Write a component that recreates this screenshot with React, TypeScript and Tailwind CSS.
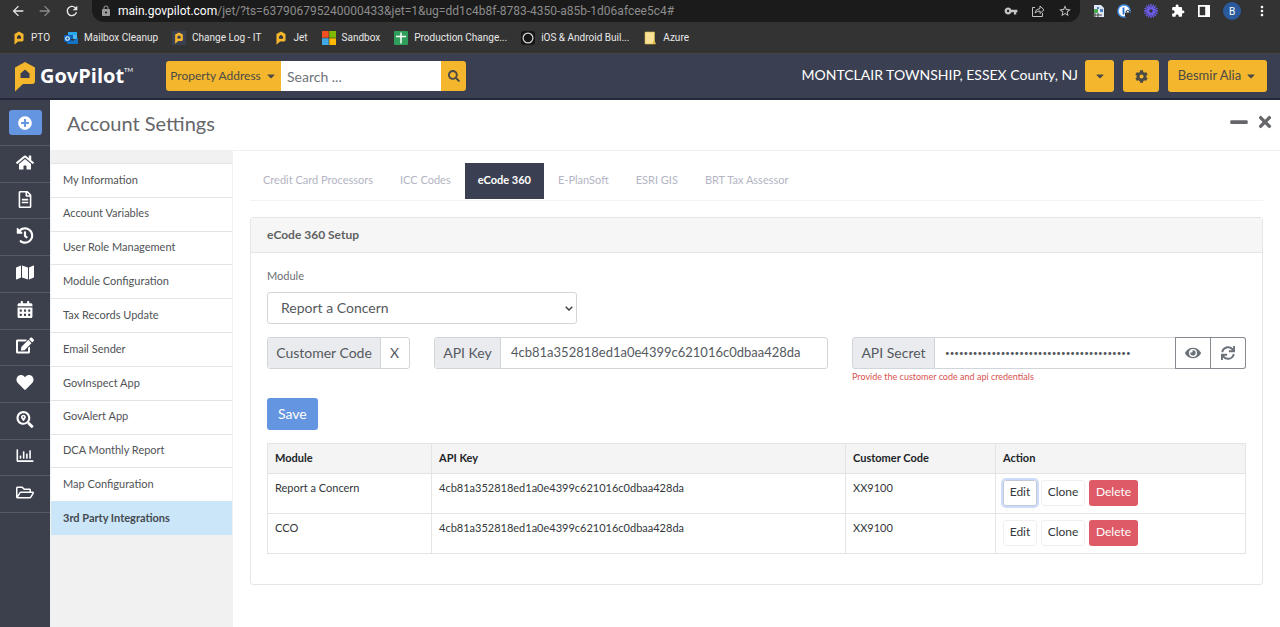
import React from 'react';
import {
    FaCalendarAlt,
    FaCaretDown,
    FaCog,
    FaEdit,
    FaEye,
    FaHeart,
    FaHistory,
    FaHome,
    FaMap,
    FaMinus,
    FaPlusCircle,
    FaRegChartBar,
    FaRegFileAlt,
    FaRegFolderOpen,
    FaSearch,
    FaSearchLocation,
    FaSync,
    FaTimes,
} from 'react-icons/fa';
import {
    MdArrowBack,
    MdArrowForward,
    MdExtension,
    MdLock,
    MdMoreVert,
    MdRefresh,
    MdStarBorder,
    MdVpnKey,
} from 'react-icons/md';

const API_KEY = '4cb81a352818ed1a0e4399c621016c0dbaa428da';

const PilotMark = ({ className }: { className: string }) => (
    <svg viewBox="0 0 22 31" className={className} aria-hidden="true">
        <path
            fill="#f3b62d"
            fillRule="evenodd"
            d="M1 6.500 11 1l10 5.500V20q0 3-3 3H9L1 30.500ZM6.500 12.500V17h9v-4.500L11 8.500Z"
        />
    </svg>
);

const OutlookIcon = () => (
    <svg viewBox="0 0 14 14" className="size-3.5" aria-hidden="true">
        <path fill="#28a8ea" d="M4 1h9v6H4z" />
        <path fill="#0f5fb5" d="M4 4h5v4H4z" />
        <path fill="#50b7f0" d="M9 4h4v4H9z" />
        <path fill="#1273c8" d="m3 7 5.500 3L14 6.500V12q0 1-1 1H4q-1 0-1-1z" />
        <rect y="4" width="7" height="7" rx="1" fill="#0b64bd" />
        <circle cx="3.500" cy="7.500" r="1.800" fill="none" stroke="#fff" strokeWidth="1.100" />
    </svg>
);

const WindowsIcon = () => (
    <svg viewBox="0 0 14 14" className="size-3.5" aria-hidden="true">
        <path fill="#f25022" d="M0 0h6.700v6.700H0z" />
        <path fill="#7fba00" d="M7.300 0H14v6.700H7.300z" />
        <path fill="#3fa9e8" d="M0 7.300h6.700V14H0z" />
        <path fill="#ffb900" d="M7.300 7.300H14V14H7.300z" />
    </svg>
);

const SheetIcon = () => (
    <svg viewBox="0 0 14 14" className="size-3.5" aria-hidden="true">
        <rect width="14" height="14" rx="1" fill="#2f9e5b" />
        <path stroke="#fff" strokeWidth="1.500" d="M7 1.500v11M2 5.500h10" />
    </svg>
);

const RingIcon = () => (
    <svg viewBox="0 0 14 14" className="size-3.5" aria-hidden="true">
        <rect width="14" height="14" rx="3" fill="#161616" />
        <circle cx="7" cy="7" r="4.900" fill="none" stroke="#d8d8d8" strokeWidth="1.200" />
    </svg>
);

const FolderIcon = () => (
    <svg viewBox="0 0 14 14" className="size-3.5" aria-hidden="true">
        <path fill="#f9e296" stroke="#d9b64a" strokeWidth=".6" d="M2 1h9.500v9l1 3H2z" />
        <path fill="#e2b93b" d="M10 10h1.500l.7 3H10z" />
    </svg>
);

const bookmarks = [
    { label: 'PTO', icon: <PilotMark className="h-3.5 w-3" /> },
    { label: 'Mailbox Cleanup', icon: <OutlookIcon /> },
    {
        label: 'Change Log - IT',
        icon: (
            <span className="flex size-3.5 items-center justify-center bg-[#3a4052]">
                <PilotMark className="h-3 w-2.5" />
            </span>
        ),
    },
    { label: 'Jet', icon: <PilotMark className="h-3.5 w-3" /> },
    { label: 'Sandbox', icon: <WindowsIcon /> },
    { label: 'Production Change...', icon: <SheetIcon /> },
    { label: 'iOS & Android Buil...', icon: <RingIcon /> },
    { label: 'Azure', icon: <FolderIcon /> },
];

const railItems = [
    { label: 'Home', Icon: FaHome },
    { label: 'Documents', Icon: FaRegFileAlt },
    { label: 'History', Icon: FaHistory },
    { label: 'Map', Icon: FaMap },
    { label: 'Calendar', Icon: FaCalendarAlt },
    { label: 'Edit', Icon: FaEdit },
    { label: 'Favorites', Icon: FaHeart },
    { label: 'Find location', Icon: FaSearchLocation },
    { label: 'Reports', Icon: FaRegChartBar },
    { label: 'Files', Icon: FaRegFolderOpen },
];

const menuItems = [
    'My Information',
    'Account Variables',
    'User Role Management',
    'Module Configuration',
    'Tax Records Update',
    'Email Sender',
    'GovInspect App',
    'GovAlert App',
    'DCA Monthly Report',
    'Map Configuration',
    '3rd Party Integrations',
];

const tabs = ['Credit Card Processors', 'ICC Codes', 'eCode 360', 'E-PlanSoft', 'ESRI GIS', 'BRT Tax Assessor'];

const rows = [
    { module: 'Report a Concern', code: 'XX9100', focused: true },
    { module: 'CCO', code: 'XX9100', focused: false },
];

const BrowserBar = () => (
    <div className="bg-[#333333] font-['Roboto','Noto_Sans',sans-serif] text-[#e8e8e8]">
        <div className="flex h-[22px] items-center">
            <div className="flex w-[92px] items-center gap-[11px] pl-[10px]">
                <button aria-label="Back"><MdArrowBack className="size-4" /></button>
                <button aria-label="Forward"><MdArrowForward className="size-4 text-[#8a8a8a]" /></button>
                <button aria-label="Reload"><MdRefresh className="size-4" /></button>
            </div>
            <div className="flex h-full min-w-0 flex-1 items-center rounded-b-xl bg-[#1b1b1b] pr-2 pl-2">
                <MdLock className="size-3 shrink-0 text-[#9b9b9b]" />
                <span className="ml-[6px] flex-1 truncate text-[12px] text-[#8c8c8c]">
                    <span className="text-white">main.govpilot.com</span>
                    /jet/?ts=637906795240000433&amp;jet=1&amp;ug=dd1c4b8f-8783-4350-a85b-1d06afcee5c4#
                </span>
                <div className="flex items-center gap-[13px] text-[#c4c4c4]">
                    <button aria-label="Passwords"><MdVpnKey className="size-3.5" /></button>
                    <button aria-label="Share">
                        <svg viewBox="0 0 14 14" className="size-3.5" fill="none" stroke="currentColor" aria-hidden="true">
                            <path d="M4 3.500H1.500v9h10V9M4 9q.5-4 5-4.500V2l4 3.800-4 3.700V7Q6 7 4 9Z" />
                        </svg>
                    </button>
                    <button aria-label="Bookmark"><MdStarBorder className="size-3.5" /></button>
                </div>
            </div>
            <div className="flex items-center gap-[13px] pr-[10px] pl-3">
                <svg viewBox="0 0 12 14" className="h-3.5 w-3" aria-hidden="true">
                    <path fill="#dfe7f2" d="M2 1h7l3 3v9H2z" />
                    <path fill="#4f7fc4" d="M5 3h2v2H5zM8 5h3v3H8z" />
                    <path fill="#4caa55" d="M2 5h4v4H2z" />
                    <path stroke="#444" d="M0 11h10M3 9v4M6 9v4" />
                </svg>
                <svg viewBox="0 0 14 14" className="size-3.5" aria-hidden="true">
                    <circle cx="7" cy="7" r="6" fill="#fff" stroke="#4b94ea" strokeWidth="1.500" />
                    <path stroke="#1a6dd6" strokeWidth="1.800" d="M6.500 3.500v7" />
                    <path fill="#333" d="M8 8.500h5.500V13H8z" />
                    <path fill="none" stroke="#333" d="M9.300 8.500V7q1.500-1.500 3 0v1.500" />
                </svg>
                <svg viewBox="0 0 14 14" className="size-3.5" fill="none" stroke="#6d5ef0" strokeWidth="1.300" aria-hidden="true">
                    <circle cx="7" cy="7" r="2.400" />
                    <path d="M7 0v4.500M7 9.500V14M0 7h4.500M9.500 7H14M2 2l3.300 3.300M8.700 8.700 12 12M2 12l3.300-3.300M8.700 5.300 12 2M4.300.500 6 4.700M8 9.300l1.700 4.200M.500 9.700 4.700 8M9.300 6l4.200-1.700M9.700.500 8 4.700M6 9.300l-1.700 4.200M.500 4.300 4.700 6M9.300 8l4.200 1.700" />
                </svg>
                <MdExtension className="size-3.5 text-white" />
                <svg viewBox="0 0 12 12" className="size-3" aria-hidden="true">
                    <path fill="#fff" fillRule="evenodd" d="M0 0h12v12H0zM1.700 1.700v8.600h5.500V1.700z" />
                </svg>
                <span className="flex size-[18px] items-center justify-center rounded-full bg-[#2a5a9c] text-[10px] text-white">B</span>
                <button aria-label="Menu"><MdMoreVert className="size-4 text-white" /></button>
            </div>
        </div>
        <nav className="flex h-8 items-center gap-[14px] border-b border-[#444444] pl-[13px]">
            {bookmarks.map((b) => (
                <a key={b.label} href="#" className="flex items-center gap-[6px] text-[10px] whitespace-nowrap">
                    {b.icon}
                    {b.label}
                </a>
            ))}
        </nav>
    </div>
);

const AppHeader = () => (
    <header className="flex h-[46px] items-center border-b-2 border-[#23293a] bg-[#3a4052] pr-[13px] pl-[14px] text-[#4b4a45]">
        <a href="#" className="flex w-[152px] items-center gap-1">
            <PilotMark className="h-[31px] w-[22px]" />
            <span className="flex items-start text-white">
                <span className="font-['Open_Sans',sans-serif] text-[20px] leading-6 font-bold">GovPilot</span>
                <span className="text-[6px] leading-3">TM</span>
            </span>
        </a>
        <form className="flex h-[30px]">
            <button type="button" className="flex w-[115px] items-center justify-center gap-1 rounded-l-[3px] bg-[#f3b62d] text-[12px]">
                Property Address <FaCaretDown className="size-3" />
            </button>
            <input
                aria-label="Search"
                placeholder="Search ..."
                className="w-40 bg-white px-[6px] text-[14px] placeholder:text-[#6f7378]"
            />
            <button type="button" aria-label="Search" className="flex w-[25px] items-center justify-center rounded-r-[3px] bg-[#f3b62d]">
                <FaSearch className="size-3" />
            </button>
        </form>
        <span className="ml-auto pr-[7px] pb-1 text-[14px] text-white">MONTCLAIR TOWNSHIP, ESSEX County, NJ</span>
        <div className="flex h-8 gap-[9px]">
            <button aria-label="Switch account" className="flex w-[29px] items-center justify-center rounded-[3px] bg-[#f3b62d]">
                <FaCaretDown className="size-3" />
            </button>
            <button aria-label="Settings" className="flex w-9 items-center justify-center rounded-[3px] bg-[#f3b62d]">
                <FaCog className="size-[13px]" />
            </button>
            <button className="flex w-[99px] items-center justify-center gap-1 rounded-[3px] bg-[#f3b62d] text-[13px]">
                Besmir Alia <FaCaretDown className="size-3" />
            </button>
        </div>
    </header>
);

const IconRail = () => (
    <aside className="w-[50px] shrink-0 bg-[#3c404c] text-white">
        <div className="flex h-[46px] items-center justify-center border-b border-[#555966]">
            <button aria-label="Add" className="flex h-[25px] w-[33px] items-center justify-center rounded-[3px] bg-[#6495e1]">
                <FaPlusCircle className="size-3.5" />
            </button>
        </div>
        <nav className="flex h-[367px] flex-col">
            {railItems.map(({ label, Icon }) => (
                <a key={label} href="#" aria-label={label} className="flex flex-1 items-center border-b border-[#555966] pb-[3px] pl-4">
                    <Icon className="h-[17px] w-[18px]" />
                </a>
            ))}
        </nav>
    </aside>
);

const SideMenu = () => (
    <aside className="w-[183px] shrink-0 bg-[#f1f1f1] px-px pt-3">
        <nav className="flex h-[372px] flex-col">
            {menuItems.map((item, i) => (
                <a
                    key={item}
                    href="#"
                    className={
                        i === menuItems.length - 1
                            ? 'flex flex-1 items-center border-t border-[#cbe6f8] bg-[#cbe6f8] px-3 pb-px text-[11px] font-bold text-[#444a50]'
                            : 'flex flex-1 items-center border-t border-[#e4e4e4] bg-white px-3 pb-px text-[11px] text-[#505356]'
                    }
                >
                    {item}
                </a>
            ))}
        </nav>
    </aside>
);

const SetupCard = () => (
    <section className="mt-4 rounded-[3px] border border-[#e5e6e8] pb-[30px]">
        <h2 className="border-b border-[#e5e6e8] bg-[#f6f6f6] px-4 py-2 text-[12px] leading-[18px] font-bold text-[#5f6163]">
            eCode 360 Setup
        </h2>
        <div className="px-4 pt-[15px]">
            <label htmlFor="module" className="block text-[11px] leading-4 text-[#6a6d70]">Module</label>
            <div className="relative mt-2 w-[310px]">
                <select
                    id="module"
                    className="h-8 w-full appearance-none rounded-[3px] border border-[#d2d5d9] bg-white px-[13px] pb-[2px] text-[14px] text-[#55595e]"
                >
                    <option>Report a Concern</option>
                </select>
                <svg viewBox="0 0 8 5" className="pointer-events-none absolute top-[14px] right-1 h-[5px] w-2" aria-hidden="true">
                    <path d="m.7.700 3.300 3.300L7.300.700" fill="none" stroke="#3f4449" strokeWidth="1.500" />
                </svg>
            </div>

            <div className="mt-[13px] grid h-[61px] grid-cols-[143fr_394fr_394fr] content-start gap-x-6 text-[14px] text-[#55595e]">
                <div className="flex h-8 overflow-hidden rounded-[3px] border border-[#d2d5d9]">
                    <label
                        htmlFor="code"
                        className="flex w-[113px] shrink-0 items-center justify-center border-r border-[#d2d5d9] bg-[#e9ebef] pb-[2px]"
                    >
                        Customer Code
                    </label>
                    <input id="code" defaultValue="X" className="min-w-0 flex-1 px-[9px] pb-[2px]" />
                </div>
                <div className="flex h-8 overflow-hidden rounded-[3px] border border-[#d2d5d9]">
                    <label
                        htmlFor="key"
                        className="flex w-[66px] shrink-0 items-center justify-center border-r border-[#d2d5d9] bg-[#e9ebef] pb-[2px]"
                    >
                        API Key
                    </label>
                    <input id="key" defaultValue={API_KEY} className="min-w-0 flex-1 px-[10px] text-[13px]" />
                </div>
                <div>
                    <div className="flex h-8">
                        <label
                            htmlFor="secret"
                            className="flex w-[83px] shrink-0 items-center justify-center rounded-l-[3px] border border-[#d2d5d9] bg-[#e9ebef] pb-[2px]"
                        >
                            API Secret
                        </label>
                        <input
                            id="secret"
                            type="password"
                            defaultValue={API_KEY}
                            className="min-w-0 flex-1 border-y border-[#d2d5d9] px-[10px] text-[8px]"
                        />
                        <button aria-label="Show secret" className="flex w-9 items-center justify-center border border-[#858a91] text-[#6c7279]">
                            <FaEye className="size-4" />
                        </button>
                        <button
                            aria-label="Refresh secret"
                            className="flex w-[35px] items-center justify-center rounded-r-[3px] border border-l-0 border-[#858a91] text-[#6c7279]"
                        >
                            <FaSync className="size-3.5" />
                        </button>
                    </div>
                    <p className="mt-[3px] text-[9px] leading-[10px] text-[#d9534f]">Provide the customer code and api credentials</p>
                </div>
            </div>

            <button className="h-8 rounded-[3px] bg-[#6495e1] px-[11px] pb-[2px] text-[14px] text-white">Save</button>

            <table className="mt-[13px] w-full table-fixed border-collapse text-[11px] text-[#33373b]">
                <colgroup>
                    <col className="w-[164px]" />
                    <col />
                    <col className="w-[150px]" />
                    <col className="w-[250px]" />
                </colgroup>
                <thead>
                    <tr className="h-[30px] bg-[#f4f4f4] text-left text-[#212529]">
                        <th className="border border-[#e3e4e6] px-[7px]">Module</th>
                        <th className="border border-[#e3e4e6] px-[7px]">API Key</th>
                        <th className="border border-[#e3e4e6] px-[7px]">Customer Code</th>
                        <th className="border border-[#e3e4e6] px-[7px]">Action</th>
                    </tr>
                </thead>
                <tbody>
                    {rows.map((row) => (
                        <tr key={row.module} className="h-10 align-top leading-4">
                            <td className="border border-[#e3e4e6] px-[7px] pt-[6px]">{row.module}</td>
                            <td className="border border-[#e3e4e6] px-[7px] pt-[6px]">{API_KEY}</td>
                            <td className="border border-[#e3e4e6] px-[7px] pt-[6px]">{row.code}</td>
                            <td className="border border-[#e3e4e6] px-[7px] pt-[6px]">
                                <div className="flex gap-1 text-[12px]">
                                    <button
                                        className={
                                            row.focused
                                                ? 'h-[26px] w-[34px] rounded-[3px] border border-[#c3c9d4] pb-[2px] ring-2 ring-[#cddcfa]'
                                                : 'h-[26px] w-[34px] rounded-[3px] border border-[#f0f0f1] pb-[2px]'
                                        }
                                    >
                                        Edit
                                    </button>
                                    <button className="h-[26px] w-11 rounded-[3px] border border-[#f0f0f1] pb-[2px]">Clone</button>
                                    <button className="h-[26px] w-[49px] rounded-[3px] bg-[#dd5a66] pb-[2px] text-white">Delete</button>
                                </div>
                            </td>
                        </tr>
                    ))}
                </tbody>
            </table>
        </div>
    </section>
);

const App = () => {
    return (
        <div className="flex min-h-screen flex-col bg-white font-['Lato',sans-serif]">
            <BrowserBar />
            <AppHeader />
            <div className="flex flex-1">
                <IconRail />
                <div className="flex min-w-0 flex-1 flex-col">
                    <div className="flex h-[51px] items-center justify-between border-b border-[#f0f0f1] pr-[6px] pb-1 pl-[17px] text-[#646669]">
                        <h1 className="text-[20px]">Account Settings</h1>
                        <div className="flex items-center gap-2 pb-[3px]">
                            <button aria-label="Minimize"><FaMinus className="h-5 w-[18px]" /></button>
                            <button aria-label="Close"><FaTimes className="size-[18px]" /></button>
                        </div>
                    </div>
                    <div className="flex flex-1">
                        <SideMenu />
                        <main className="min-w-0 flex-1 px-[17px] pt-3">
                            <div role="tablist" className="flex gap-px border-b border-[#f3f3f4] pb-px">
                                {tabs.map((tab) => (
                                    <button
                                        key={tab}
                                        role="tab"
                                        aria-selected={tab === 'eCode 360'}
                                        className={
                                            tab === 'eCode 360'
                                                ? 'h-9 bg-[#3a4052] px-[13px] pb-px text-[11px] font-bold text-white'
                                                : 'h-9 px-[13px] pb-px text-[11px] text-[#b3b5c4]'
                                        }
                                    >
                                        {tab}
                                    </button>
                                ))}
                            </div>
                            <SetupCard />
                        </main>
                    </div>
                </div>
            </div>
        </div>
    );
};

export default App;
